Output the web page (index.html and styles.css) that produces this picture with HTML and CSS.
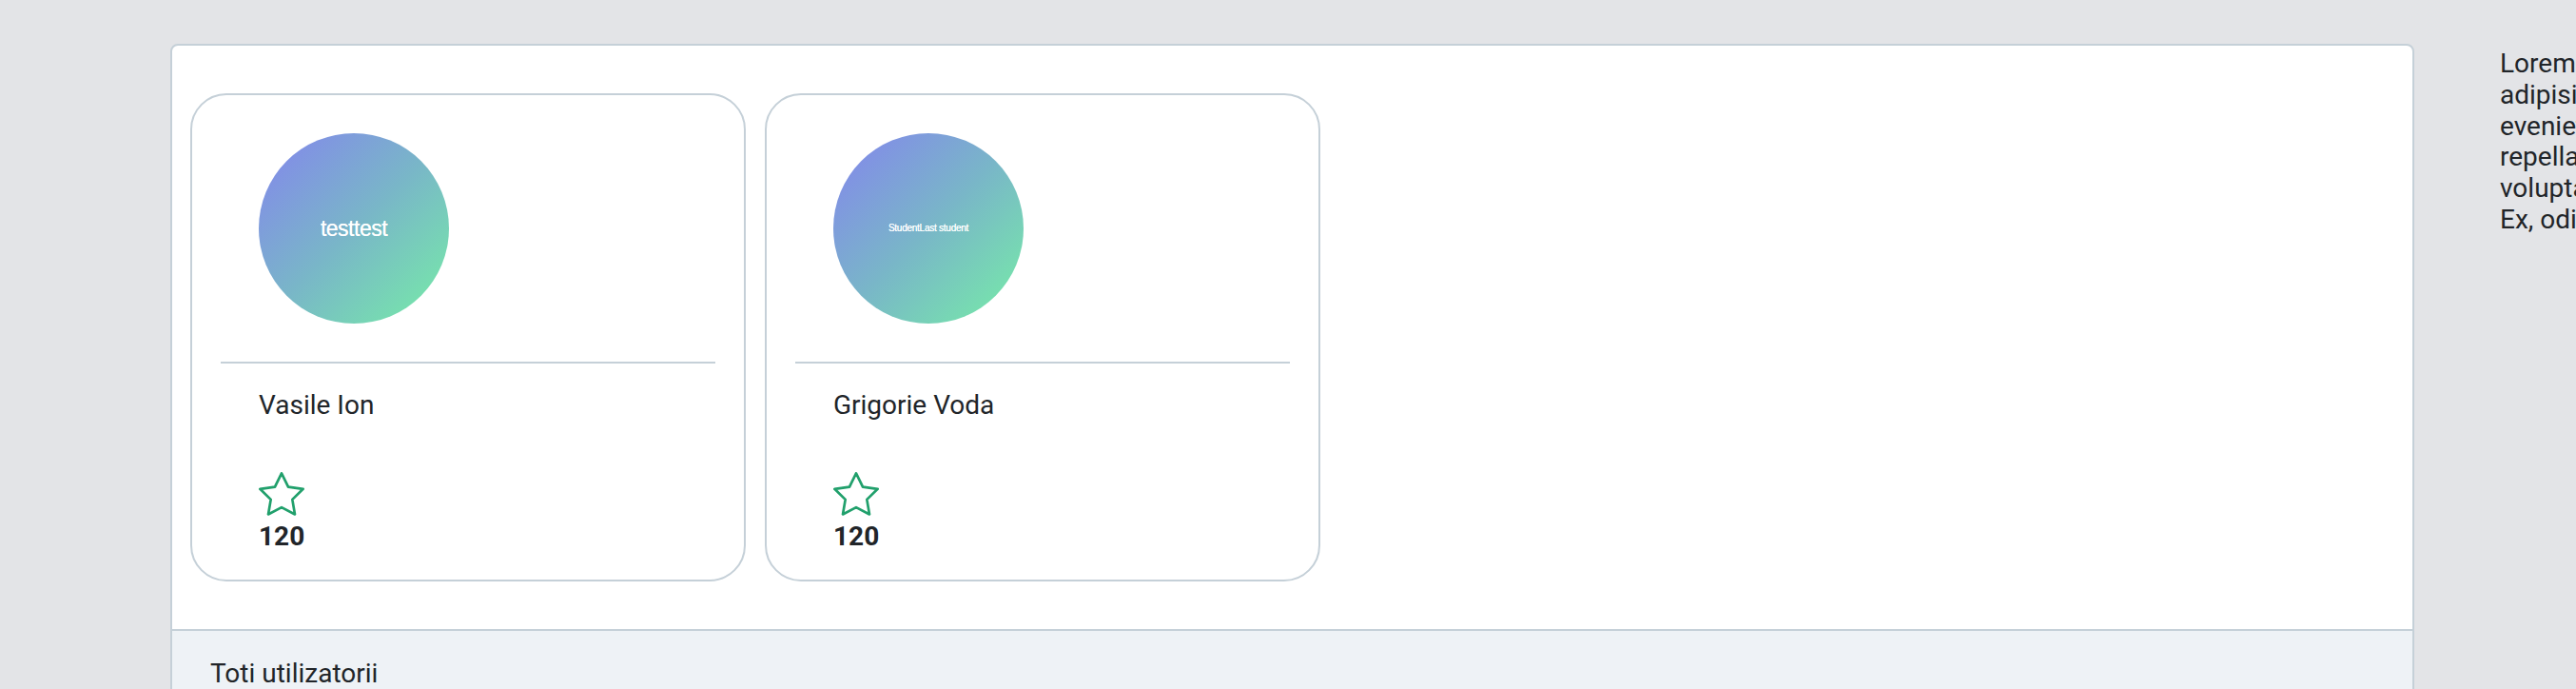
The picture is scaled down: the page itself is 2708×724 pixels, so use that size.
FILE: index.html
```html
<!DOCTYPE html>
<html lang="ro">
<head>
<meta charset="utf-8">
<title>Utilizatori</title>
<link rel="stylesheet" href="styles.css">
</head>
<body>
<div class="page">
  <section class="panel">
    <div class="panel-body">
      <article class="user-card">
        <div class="avatar-wrap">
          <div class="avatar"><span class="avatar-label">testtest</span></div>
        </div>
        <hr class="divider">
        <div class="user-name">Vasile Ion</div>
        <div class="stats">
          <svg class="star" width="48" height="46" viewBox="1.4 1.4 21.2 20.3" aria-hidden="true">
            <polygon points="12 2 15.09 8.26 22 9.27 17 14.14 18.18 21.02 12 17.77 5.82 21.02 7 14.14 2 9.27 8.91 8.26 12 2" fill="none" stroke="currentColor" stroke-width="1.2" stroke-linejoin="round" stroke-linecap="round"/>
          </svg>
          <div class="score">120</div>
        </div>
      </article>
      <article class="user-card">
        <div class="avatar-wrap">
          <div class="avatar"><span class="avatar-label small">StudentLast student</span></div>
        </div>
        <hr class="divider">
        <div class="user-name">Grigorie Voda</div>
        <div class="stats">
          <svg class="star" width="48" height="46" viewBox="1.4 1.4 21.2 20.3" aria-hidden="true">
            <polygon points="12 2 15.09 8.26 22 9.27 17 14.14 18.18 21.02 12 17.77 5.82 21.02 7 14.14 2 9.27 8.91 8.26 12 2" fill="none" stroke="currentColor" stroke-width="1.2" stroke-linejoin="round" stroke-linecap="round"/>
          </svg>
          <div class="score">120</div>
        </div>
      </article>
    </div>
    <div class="panel-footer">Toti utilizatorii</div>
  </section>
  <aside class="side-text">
    <p>Lorem ipsum dolor sit amet consectetur<br>adipisicing elit. Quibusdam, molestias<br>eveniet asperiores nihil quae sit<br>repellat deserunt magnam tempore<br>voluptatem quasi, laborum sunt.<br>Ex, odio nobis!</p>
  </aside>
</div>
</body>
</html>
```

FILE: styles.css
```css
html, body {
  margin: 0;
  padding: 0;
  overflow: hidden;
  height: 100%;
}

body {
  background: #e3e4e7;
  font-family: Roboto, "Noto Sans", Arial, sans-serif;
  font-size: 28px;
  line-height: 32.8px;
  color: #212529;
}

.page {
  display: flex;
  align-items: flex-start;
  gap: 90px;
  padding: 46px 0 0 179px;
}

.panel {
  flex: 0 0 2359px;
  box-sizing: border-box;
  background: #ffffff;
  border: 2px solid #c5d0d8;
  border-radius: 8px;
  overflow: hidden;
}

.panel-body {
  display: flex;
  gap: 20px;
  padding: 50px 19px 50px;
}

.user-card {
  flex: 0 0 584px;
  box-sizing: border-box;
  border: 2px solid #c5d0d8;
  border-radius: 38px;
  padding: 40px 30px 28px 30px;
}

.avatar-wrap {
  padding-left: 40px;
}

.avatar {
  width: 200px;
  height: 200px;
  border-radius: 50%;
  background: linear-gradient(135deg, #8484ee 0%, #79b6c8 50%, #76eea6 100%);
  display: flex;
  align-items: center;
  justify-content: center;
}

.avatar-label {
  font-family: "Liberation Sans", Arial, sans-serif;
  color: #ffffff;
  font-size: 23px;
  line-height: 1;
  letter-spacing: -0.5px;
  text-shadow: 0 0 0.6px #ffffff;
}

.avatar-label.small {
  font-size: 10px;
  letter-spacing: -0.25px;
}

.divider {
  margin: 40px 0 0;
  border: 0;
  height: 2px;
  background: #c5d0d8;
}

.user-name {
  margin-top: 28px;
  padding-left: 40px;
}

.stats {
  margin-top: 53px;
  padding-left: 40px;
}

.star {
  display: block;
  color: #21a06c;
}

.score {
  margin-top: 6px;
  font-weight: 700;
}

.panel-footer {
  background: #eef2f6;
  border-top: 2px solid #c5d0d8;
  padding: 29px 40px;
}

.side-text {
  flex: 0 0 auto;
  padding-top: 5px;
}

.side-text p {
  margin: 0;
  white-space: nowrap;
}
```
